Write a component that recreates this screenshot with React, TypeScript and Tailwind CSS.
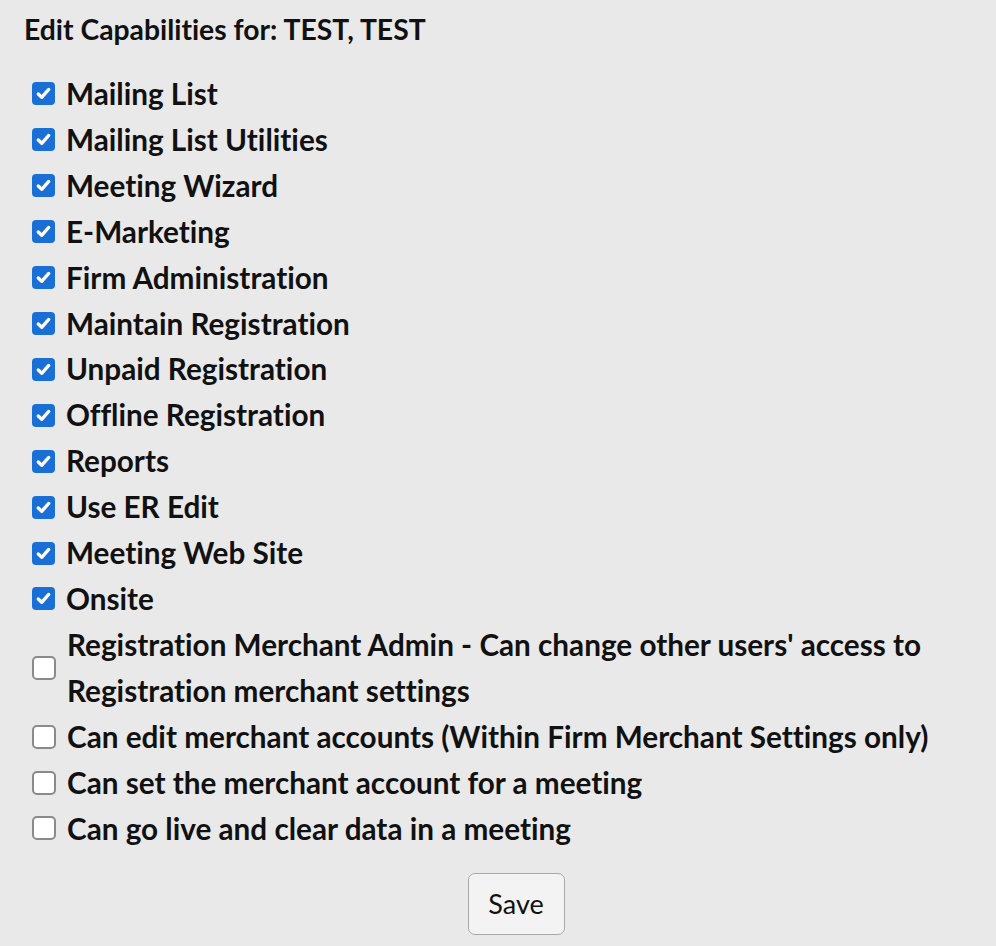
import React, { useState } from 'react';

interface Capability {
    id: string;
    label: string;
    checked: boolean;
}

const initialCapabilities: Capability[] = [
    { id: 'mailing', label: 'Mailing List', checked: true },
    { id: 'mailingUtil', label: 'Mailing List Utilities', checked: true },
    { id: 'wizard', label: 'Meeting Wizard', checked: true },
    { id: 'emarketing', label: 'E-Marketing', checked: true },
    { id: 'firmAdmin', label: 'Firm Administration', checked: true },
    { id: 'maintainReg', label: 'Maintain Registration', checked: true },
    { id: 'unpaidReg', label: 'Unpaid Registration', checked: true },
    { id: 'offlineReg', label: 'Offline Registration', checked: true },
    { id: 'reports', label: 'Reports', checked: true },
    { id: 'erEdit', label: 'Use ER Edit', checked: true },
    { id: 'webSite', label: 'Meeting Web Site', checked: true },
    { id: 'onsite', label: 'Onsite', checked: true },
    { id: 'regMerchant', label: "Registration Merchant Admin - Can change other users' access to Registration merchant settings", checked: false },
    { id: 'editMerchant', label: 'Can edit merchant accounts (Within Firm Merchant Settings only)', checked: false },
    { id: 'setMerchant', label: 'Can set the merchant account for a meeting', checked: false },
    { id: 'goLive', label: 'Can go live and clear data in a meeting', checked: false },
];

const Box = ({ checked }: { checked: boolean }) => {
    if (checked) {
        return (
            <span className="flex w-[23px] h-[23px] shrink-0 items-center justify-center rounded-[4px] bg-[#1a6fd6]">
                <svg viewBox="0 0 16 16" className="w-[19px] h-[19px]">
                    <path d="M3.6 8.4 L6.5 11.2 L12.4 4.6" fill="none" stroke="#fff" strokeWidth="2.8" strokeLinecap="round" strokeLinejoin="round" />
                </svg>
            </span>
        );
    }
    return <span className="block w-[24px] h-[24px] shrink-0 rounded-[5px] border-[2px] border-[#8a8a8a] bg-white" />;
};

export default function App() {
    const [caps, setCaps] = useState(initialCapabilities);

    const toggle = (id: string) => {
        setCaps(caps.map(c => (c.id === id ? { ...c, checked: !c.checked } : c)));
    };

    return (
        <div className="min-h-[946px] bg-[#e9e9e9] text-[#111] pt-[14px] pl-[24px] pr-[40px] [font-variant-ligatures:none]" style={{ fontFamily: 'Lato, "Open Sans", sans-serif' }}>
            <h2 className="text-[28.3px] leading-[30px] font-bold">Edit Capabilities for: TEST, TEST</h2>

            <div className="mt-[27px] flex flex-col">
                {caps.map(c => (
                    <label key={c.id} className="flex items-center gap-[11px] pl-[8px] cursor-pointer" onClick={() => toggle(c.id)}>
                        <Box checked={c.checked} />
                        <span className="text-[29.7px] leading-[45.9px] font-bold">{c.label}</span>
                    </label>
                ))}
            </div>

            <div className="mt-[22px] flex justify-center pl-[36px] pr-0 -mr-[40px] -ml-[24px]">
                <button className="w-[97px] h-[62px] rounded-[7px] border border-[#a9a9a9] bg-[#f3f3f3] text-[27px]">
                    Save
                </button>
            </div>
        </div>
    );
}
